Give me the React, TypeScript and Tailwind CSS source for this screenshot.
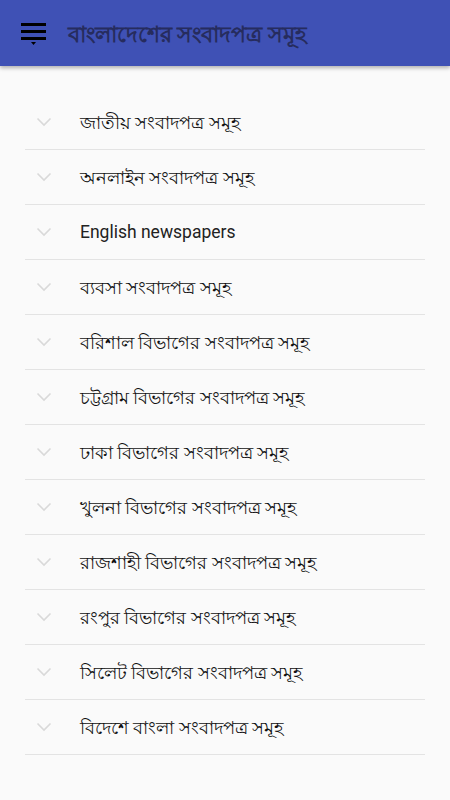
const items = [
  'জাতীয় সংবাদপত্র সমূহ',
  'অনলাইন সংবাদপত্র সমূহ',
  'English newspapers',
  'ব্যবসা সংবাদপত্র সমূহ',
  'বরিশাল বিভাগের সংবাদপত্র সমূহ',
  'চট্টগ্রাম বিভাগের সংবাদপত্র সমূহ',
  'ঢাকা বিভাগের সংবাদপত্র সমূহ',
  'খুলনা বিভাগের সংবাদপত্র সমূহ',
  'রাজশাহী বিভাগের সংবাদপত্র সমূহ',
  'রংপুর বিভাগের সংবাদপত্র সমূহ',
  'সিলেট বিভাগের সংবাদপত্র সমূহ',
  'বিদেশে বাংলা সংবাদপত্র সমূহ',
];

function Chevron() {
  return (
    <svg width="16" height="10" viewBox="0 0 16 10" fill="none">
      <path d="M1.5 1.5 L8 8 L14.5 1.5" stroke="#d9d9d9" strokeWidth="1.6" />
    </svg>
  );
}

function MenuIcon() {
  return (
    <svg width="26" height="24" viewBox="0 0 26 24">
      <rect x="0" y="0" width="25" height="3" fill="#000" />
      <rect x="0" y="7" width="25" height="3" fill="#000" />
      <rect x="0" y="14" width="25" height="3" fill="#000" />
      <path d="M10 19 L15 19 L12.5 22 Z" fill="#000" />
    </svg>
  );
}

export default function App() {
  return (
    <div className="h-[800px] w-[450px] overflow-hidden bg-[#fafafa] font-['Roboto','Noto_Sans',sans-serif]">
      <header className="relative z-10 flex h-[66px] items-center bg-[#3f51b5] pl-[21px] shadow-[0_2px_4px_rgba(0,0,0,0.3)]">
        <div className="mt-[3px]">
          <MenuIcon />
        </div>
        <h1 className="ml-[21px] mt-[3px] text-[22px] font-bold text-[#262c5e]">বাংলাদেশের সংবাদপত্র সমূহ</h1>
      </header>

      <ul className="px-[25px] pt-[29px]">
        {items.map((item) => (
          <li key={item} className="flex h-[55px] items-center border-b border-[#e3e3e3]">
            <div className="ml-[11px] w-[44px]">
              <Chevron />
            </div>
            <span
              className={
                item.startsWith('English')
                  ? 'text-[17.5px] font-normal text-[#222]'
                  : 'text-[18px] text-[#111]'
              }
            >
              {item}
            </span>
          </li>
        ))}
        <li className="h-[17px] overflow-hidden">
          <div className="flex h-[55px] items-center">
            <div className="ml-[11px] w-[44px]" />
            <span className="text-[18px] text-[#111]">আন্তর্জাতিক সংবাদপত্র সমূহ</span>
          </div>
        </li>
      </ul>
    </div>
  );
}
